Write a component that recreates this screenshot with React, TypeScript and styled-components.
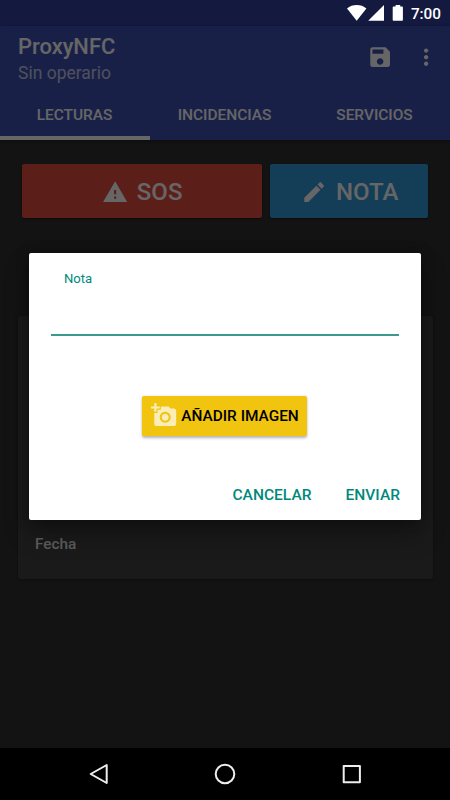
import React from 'react';
import styled, { createGlobalStyle } from 'styled-components';

const GlobalStyle = createGlobalStyle`
  * { box-sizing: border-box; }
  body { margin: 0; background: #303030; }
  button { border: 0; padding: 0; background: none; font: inherit; color: inherit; }
  svg { display: block; flex: none; }
`;

const Screen = styled.div`
  position: relative;
  width: 450px;
  height: 800px;
  display: flex;
  flex-direction: column;
  overflow: hidden;
  background: #303030;
  color: #fff;
  font-family: Roboto, 'Liberation Sans', sans-serif;
`;

const StatusBar = styled.div`
  height: 26px;
  flex: none;
  background: #303f9f;
`;

const Header = styled.header`
  height: 114px;
  flex: none;
  display: flex;
  flex-direction: column;
  background: #3f51b5;
  box-shadow: 0 1px 3px rgba(0, 0, 0, 0.4);
`;

const Toolbar = styled.div`
  height: 62px;
  display: flex;
  align-items: center;
  padding: 0 11px 0 18px;
`;

const Titles = styled.div`
  flex: 1;
  padding-top: 5px;
`;

const Title = styled.h1`
  margin: 0;
  font-size: 21.9px;
  line-height: 26px;
  font-weight: 465;
`;

const Subtitle = styled.div`
  font-size: 17.5px;
  line-height: 26px;
  color: rgba(255, 255, 255, 0.7);
`;

const Actions = styled.div`
  display: flex;
  gap: 20px;
`;

const Tabs = styled.nav`
  flex: 1;
  display: grid;
  grid-template-columns: repeat(3, 1fr);
`;

const Tab = styled.button<{ $active?: boolean }>`
  font-size: 15.45px;
  line-height: 18px;
  font-weight: 465;
  padding: 5px 1px 0 0;
  border-bottom: 4px solid ${(p) => (p.$active ? '#fff' : 'transparent')};
`;

const Content = styled.main`
  flex: 1;
  display: flex;
  flex-direction: column;
  padding: 24px 17px 0 18px;
`;

const ButtonRow = styled.div`
  display: flex;
  gap: 8px;
  padding: 0 4px;
`;

const BigButton = styled.button<{ $color: string; $width: number; $shift: number }>`
  width: ${(p) => p.$width}px;
  height: 54px;
  display: flex;
  align-items: center;
  justify-content: center;
  gap: 9px;
  padding: 2px 0 0 ${(p) => p.$shift}px;
  border-radius: 2px;
  background: ${(p) => p.$color};
  box-shadow: 0 1px 2px rgba(0, 0, 0, 0.5);
  font-size: 24px;
  font-weight: 465;
`;

const Card = styled.section`
  height: 262.5px;
  margin-top: 98px;
  padding: 0 17px 26px;
  display: flex;
  align-items: flex-end;
  border-radius: 3px;
  background: #424242;
  box-shadow: 0 1px 3px rgba(0, 0, 0, 0.3);
  font-size: 15.3px;
  line-height: 18px;
  font-weight: 465;
  color: rgba(255, 255, 255, 0.88);
`;

const Scrim = styled.div`
  position: absolute;
  inset: 0;
  display: flex;
  flex-direction: column;
  align-items: center;
  background: rgba(0, 0, 0, 0.6);
`;

const SystemStatus = styled.div`
  align-self: stretch;
  height: 26px;
  display: flex;
  align-items: center;
  justify-content: flex-end;
  padding-right: 9px;
  font-size: 15.3px;
  font-weight: 500;
`;

const Clock = styled.span`
  margin-left: 8px;
  padding-top: 2px;
`;

const Dialog = styled.div`
  width: 392px;
  height: 267.4px;
  margin-top: 227px;
  padding: 16px 22px 0 22px;
  display: flex;
  flex-direction: column;
  border-radius: 2px;
  background: #fff;
  color: #00897b;
  box-shadow: 0 14px 26px rgba(0, 0, 0, 0.3), 0 0 14px rgba(0, 0, 0, 0.3);
`;

const Field = styled.label`
  height: 67px;
  padding-left: 13px;
  font-size: 13.1px;
  line-height: 19px;
  border-bottom: 2px solid #3b9a8f;
`;

const ImageButton = styled.button`
  align-self: center;
  width: 165px;
  height: 40px;
  margin: 59.5px 0 0 -1px;
  padding-left: 9px;
  display: flex;
  align-items: center;
  gap: 4px;
  border-radius: 2px;
  background: #f1c40f;
  color: #000;
  font-size: 15.4px;
  font-weight: 465;
  white-space: nowrap;
  box-shadow: 0 1.5px 3px rgba(0, 0, 0, 0.3);
`;

const DialogActions = styled.div`
  display: flex;
  justify-content: flex-end;
  gap: 34px;
  margin: 50px -1px 0 0;
  font-size: 15.55px;
  line-height: 18px;
  font-weight: 465;
`;

const NavBar = styled.div`
  align-self: stretch;
  height: 52px;
  margin-top: auto;
  display: flex;
  align-items: center;
  justify-content: space-between;
  padding: 0 87px 0 87px;
  background: #000;
`;

const Icon = ({ d, fill = '#fff', opacity = 1 }: { d: string; fill?: string; opacity?: number }) => (
  <svg width="26.25" height="26.25" viewBox="0 0 24 24" fill={fill} opacity={opacity}>
    <path d={d} />
  </svg>
);

const icons = {
  save: 'M17 3H5c-1.11 0-2 .9-2 2v14c0 1.1.89 2 2 2h14c1.1 0 2-.9 2-2V7l-4-4zm-5 16c-1.66 0-3-1.34-3-3s1.34-3 3-3 3 1.34 3 3-1.34 3-3 3zm3-10H5V5h10v4z',
  more: 'M12 8c1.1 0 2-.9 2-2s-.9-2-2-2-2 .9-2 2 .9 2 2 2zm0 2c-1.1 0-2 .9-2 2s.9 2 2 2 2-.9 2-2-.9-2-2-2zm0 6c-1.1 0-2 .9-2 2s.9 2 2 2 2-.9 2-2-.9-2-2-2z',
  warning: 'M1 21h22L12 2 1 21zm12-3h-2v-2h2v2zm0-4h-2v-4h2v4z',
  edit: 'M3 17.25V21h3.75L17.81 9.94l-3.75-3.75L3 17.25zM20.71 7.04c.39-.39.39-1.02 0-1.41l-2.34-2.34c-.39-.39-1.02-.39-1.41 0l-1.83 1.83 3.75 3.75 1.83-1.83z',
  addPhoto:
    'M3 4V1h2v3h3v2H5v3H3V6H0V4h3zm3 6V7h3V4h7l1.83 2H21c1.1 0 2 .9 2 2v12c0 1.1-.9 2-2 2H5c-1.1 0-2-.9-2-2V10h3zm7 9c2.76 0 5-2.24 5-5s-2.24-5-5-5-5 2.24-5 5 2.24 5 5 5zm-3.2-5c0 1.77 1.43 3.2 3.2 3.2s3.2-1.43 3.2-3.2-1.43-3.2-3.2-3.2-3.2 1.43-3.2 3.2z',
};

export default function App() {
  return (
    <Screen>
      <GlobalStyle />
      <StatusBar />
      <Header>
        <Toolbar>
          <Titles>
            <Title>ProxyNFC</Title>
            <Subtitle>Sin operario</Subtitle>
          </Titles>
          <Actions>
            <Icon d={icons.save} />
            <Icon d={icons.more} />
          </Actions>
        </Toolbar>
        <Tabs>
          <Tab $active>LECTURAS</Tab>
          <Tab>INCIDENCIAS</Tab>
          <Tab>SERVICIOS</Tab>
        </Tabs>
      </Header>
      <Content>
        <ButtonRow>
          <BigButton $color="#e74c3c" $width={240} $shift={0}>
            <Icon d={icons.warning} />
            SOS
          </BigButton>
          <BigButton $color="#3498db" $width={158} $shift={1.4}>
            <Icon d={icons.edit} />
            NOTA
          </BigButton>
        </ButtonRow>
        <Card>Fecha</Card>
      </Content>
      <Scrim>
        <SystemStatus>
          <svg width="56" height="16" viewBox="0 0 56 16" fill="#fff">
            <path d="M0 3.4C2.7 1.2 6 0 9.7 0s7 1.2 9.7 3.4L9.7 15.8z" />
            <path d="M37 0v15.8H21.2z" />
            <path d="M48.6 0h4.6v1.6h1.7c.6 0 1 .4 1 1v12.2c0 .6-.4 1-1 1h-8.2c-.6 0-1-.4-1-1V2.6c0-.6.4-1 1-1h1.9z" />
          </svg>
          <Clock>7:00</Clock>
        </SystemStatus>
        <Dialog role="dialog">
          <Field>Nota</Field>
          <ImageButton>
            <Icon d={icons.addPhoto} opacity={0.7} />
            AÑADIR IMAGEN
          </ImageButton>
          <DialogActions>
            <button>CANCELAR</button>
            <button>ENVIAR</button>
          </DialogActions>
        </Dialog>
        <NavBar>
          <svg width="24" height="24" viewBox="0 0 24 24" fill="none" stroke="#eee" strokeWidth="2" strokeLinejoin="round">
            <path d="M3.7 12 19.7 3v18z" />
          </svg>
          <svg width="24" height="24" viewBox="0 0 24 24" fill="none" stroke="#eee" strokeWidth="2">
            <circle cx="12" cy="12" r="9.3" />
          </svg>
          <svg width="24" height="24" viewBox="0 0 24 24" fill="none" stroke="#eee" strokeWidth="2" strokeLinejoin="round">
            <path d="M4.7 4h16.2v16.2H4.7z" />
          </svg>
        </NavBar>
      </Scrim>
    </Screen>
  );
}
